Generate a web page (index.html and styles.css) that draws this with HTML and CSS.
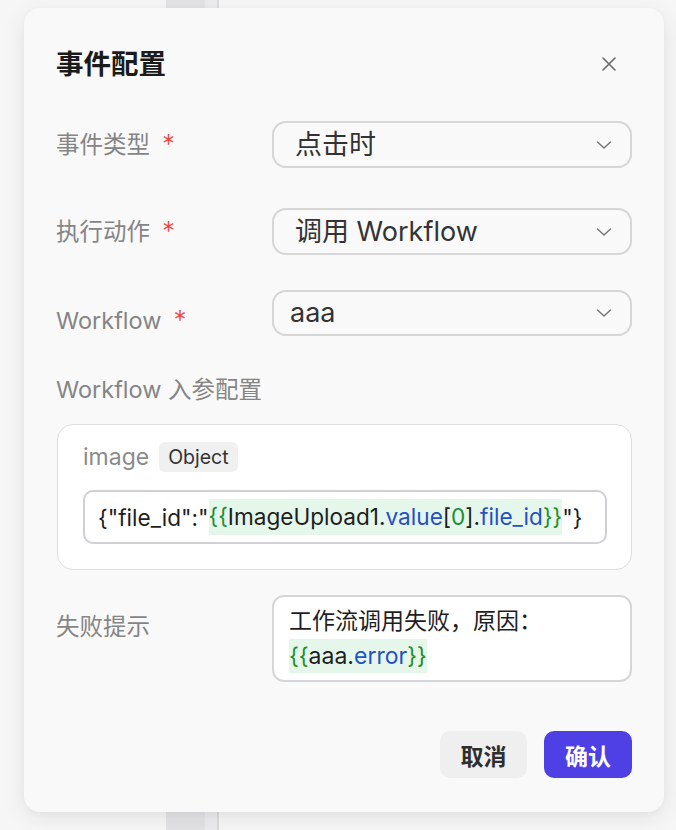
FILE: index.html
```html
<!DOCTYPE html>
<html lang="zh">
<head>
<meta charset="utf-8">
<link rel="stylesheet" href="styles.css">
</head>
<body>
<div class="modal">
  <div class="header">
    <div class="title">事件配置</div>
    <svg class="close" width="16" height="16" viewBox="0 0 16 16"><path d="M2 2L14 14M14 2L2 14" stroke="#6b6b6b" stroke-width="1.6" fill="none" stroke-linecap="round"/></svg>
  </div>

  <div class="row r1">
    <div class="label">事件类型<span class="req">*</span></div>
    <div class="select"><span class="val">点击时</span><svg class="chev" width="16" height="10" viewBox="0 0 16 10"><path d="M1.5 2L8 8L14.5 2" stroke="#777" stroke-width="1.5" fill="none" stroke-linecap="round" stroke-linejoin="round"/></svg></div>
  </div>

  <div class="row r2">
    <div class="label">执行动作<span class="req">*</span></div>
    <div class="select"><span class="val">调用 Workflow</span><svg class="chev" width="16" height="10" viewBox="0 0 16 10"><path d="M1.5 2L8 8L14.5 2" stroke="#777" stroke-width="1.5" fill="none" stroke-linecap="round" stroke-linejoin="round"/></svg></div>
  </div>

  <div class="row r3">
    <div class="label lower">Workflow<span class="req">*</span></div>
    <div class="select small"><span class="val">aaa</span><svg class="chev" width="16" height="10" viewBox="0 0 16 10"><path d="M1.5 2L8 8L14.5 2" stroke="#777" stroke-width="1.5" fill="none" stroke-linecap="round" stroke-linejoin="round"/></svg></div>
  </div>

  <div class="section-label">Workflow 入参配置</div>

  <div class="card">
    <div class="param-head">
      <span class="pname">image</span>
      <span class="tag">Object</span>
    </div>
    <div class="code-input">{"file_id":"<span class="expr"><span class="g">{{</span>ImageUpload1.<span class="b">value</span>[<span class="g">0</span>].<span class="b">file_id</span><span class="g">}}</span></span>"}</div>
  </div>

  <div class="row r4">
    <div class="label top">失败提示</div>
    <div class="textarea">工作流调用失败，原因：<br><span class="expr"><span class="g">{{</span>aaa.<span class="b">error</span><span class="g">}}</span></span></div>
  </div>

  <div class="footer">
    <button class="btn cancel">取消</button>
    <button class="btn ok">确认</button>
  </div>
</div>
</body>
</html>
```

FILE: styles.css
```css
* { box-sizing: border-box; }
html, body { margin: 0; height: 100%; }
body {
  background-color: #f6f6f7;
  background-image: linear-gradient(to right,
    transparent 166px, #e3e3e5 166px, #e3e3e5 205px,
    #ececee 205px, #ececee 217px, #dcdcde 217px, #dcdcde 219px, transparent 219px);
  padding: 8px 12px 0 24px;
  font-family: Inter, "Noto Sans CJK SC", sans-serif;
  overflow: hidden;
}
.modal {
  width: 640px;
  height: 804px;
  background: #f9f9f9;
  border-radius: 16px;
  box-shadow: 0 6px 24px rgba(0,0,0,0.08), 0 2px 6px rgba(0,0,0,0.03);
  padding: 40px 32px 0 32px;
}
.header {
  height: 32px;
  display: flex;
  align-items: center;
  justify-content: space-between;
}
.title {
  font-size: 27.5px;
  font-weight: 700;
  color: #1b1b1b;
  line-height: 32px;
}
.close { margin-right: 15px; }
.row {
  display: flex;
  align-items: center;
}
.r1 { margin-top: 41px; }
.r2 { margin-top: 40px; }
.r3 { margin-top: 35px; }
.r4 { margin-top: 25px; align-items: flex-start; }
.label {
  width: 216px;
  font-size: 23.5px;
  color: #858585;
  line-height: 30px;
}
.label.lower { padding-top: 14px; }
.label.top { padding-top: 17px; }
.req {
  color: #f0443a;
  margin-left: 12px;
  font-size: 26px;
  font-weight: 300;
}
.select {
  width: 360px;
  height: 47px;
  border: 2px solid #d6d6d6;
  border-radius: 14px;
  display: flex;
  align-items: center;
  justify-content: space-between;
  padding: 0 18px 0 21px;
}
.select.small { padding-left: 16px; height: 46px; }
.val {
  font-size: 27px;
  color: #333;
  line-height: 34px;
}
.section-label {
  margin-top: 40px;
  font-size: 23.5px;
  line-height: 28px;
  color: #858585;
}
.card {
  margin-top: 20px;
  margin-left: 1px;
  width: 575px;
  height: 146px;
  background: #fff;
  border: 1.5px solid #dedee0;
  border-radius: 16px;
  padding: 17px 24px 0 25px;
}
.param-head {
  display: flex;
  align-items: center;
  height: 30px;
}
.pname {
  font-size: 23px;
  color: #8a8a8a;
  margin-right: 10px;
}
.tag {
  background: #f0f0f0;
  border-radius: 6px;
  font-size: 19.5px;
  color: #333;
  height: 30px;
  line-height: 30px;
  padding: 0 9px;
}
.code-input {
  margin-top: 18px;
  height: 54px;
  border: 2px solid #d0d0d4;
  border-radius: 10px;
  background: #fff;
  display: flex;
  align-items: center;
  padding-left: 13px;
  font-size: 22.6px;
  color: #1e1e1e;
  white-space: nowrap;
}
.expr { background: #e4f7ea; line-height: 36px; }
.g { color: #1f8f2f; }
.b { color: #2450c4; }
.textarea {
  width: 360px;
  height: 87px;
  border: 2px solid #d6d6d8;
  border-radius: 12px;
  background: #fff;
  padding: 7px 15px;
  font-size: 23px;
  line-height: 35px;
  color: #1e1e1e;
}
.textarea .expr { display: inline-block; line-height: 34px; }
.footer {
  margin-top: 49px;
  display: flex;
  justify-content: flex-end;
  gap: 17px;
}
.btn {
  height: 47px;
  border: none;
  border-radius: 10px;
  font-family: inherit;
  font-size: 23px;
  font-weight: 700;
  padding: 0;
}
.cancel { width: 87px; background: #efefef; color: #2e2e2e; }
.ok { width: 88px; background: #4f40e6; color: #fff; }
```
